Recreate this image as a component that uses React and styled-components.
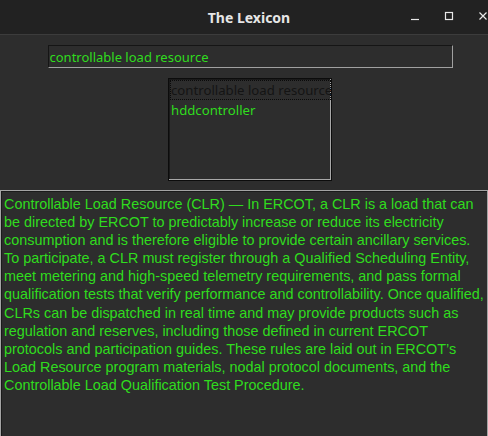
import styled, { createGlobalStyle } from "styled-components";

const GlobalStyle = createGlobalStyle`
    html, body {
        margin: 0;
        padding: 0;
        background: #2d2d2d;
        overflow: hidden;
    }
`

const lines = [
    "Controllable Load Resource (CLR) — In ERCOT, a CLR is a load that can",
    "be directed by ERCOT to predictably increase or reduce its electricity",
    "consumption and is therefore eligible to provide certain ancillary services.",
    "To participate, a CLR must register through a Qualified Scheduling Entity,",
    "meet metering and high-speed telemetry requirements, and pass formal",
    "qualification tests that verify performance and controllability. Once qualified,",
    "CLRs can be dispatched in real time and may provide products such as",
    "regulation and reserves, including those defined in current ERCOT",
    "protocols and participation guides. These rules are laid out in ERCOT’s",
    "Load Resource program materials, nodal protocol documents, and the",
    "Controllable Load Qualification Test Procedure.",
]

const items = ["controllable load resource", "hddcontroller"]

export default function App() {
    return (
        <Window>
            <GlobalStyle />
            <TitleBar>
                <Title>The Lexicon</Title>
                <Controls>
                    <ControlButton>
                        <svg width="10" height="10" viewBox="0 0 10 10">
                            <path d="M1 8.5h8" stroke="#e8e8e8" strokeWidth="1.2" />
                        </svg>
                    </ControlButton>
                    <ControlButton>
                        <svg width="10" height="10" viewBox="0 0 10 10">
                            <rect x="1.5" y="1.5" width="7" height="7" fill="none" stroke="#e8e8e8" strokeWidth="1.2" />
                        </svg>
                    </ControlButton>
                    <ControlButton>
                        <svg width="10" height="10" viewBox="0 0 10 10">
                            <path d="M1.5 1.5l7 7M8.5 1.5l-7 7" stroke="#e8e8e8" strokeWidth="1.2" />
                        </svg>
                    </ControlButton>
                </Controls>
            </TitleBar>
            <Body>
                <SearchColumn>
                    <SearchEntry defaultValue="controllable load resource" spellCheck={false} />
                    <ResultList>
                        {items.map((item, i) => (
                            <ResultItem key={item} selected={i === 0}>{item}</ResultItem>
                        ))}
                    </ResultList>
                </SearchColumn>
                <Definition>
                    {lines.map(line => <Line key={line}>{line}</Line>)}
                </Definition>
            </Body>
        </Window>
    )
}

const Window = styled.div`
    width: 488px;
    height: 436px;
    display: flex;
    flex-direction: column;
    background: #2d2d2d;
    overflow: hidden;
`

const TitleBar = styled.header`
    height: 34px;
    flex-shrink: 0;
    background: #222222;
    border-bottom: 1px solid #3c3c3c;
    display: flex;
    align-items: center;
    justify-content: center;
    position: relative;
`

const Title = styled.h1`
    margin: 0 0 0 10px;
    font-family: "Noto Sans", sans-serif;
    font-size: 14px;
    font-weight: bold;
    color: #e6e6e6;
`

const Controls = styled.div`
    position: absolute;
    top: 11px;
    left: 410px;
    display: flex;
    gap: 24px;
`

const ControlButton = styled.span`
    width: 10px;
    height: 10px;
    display: flex;
`

const Body = styled.main`
    flex: 1;
    display: flex;
    flex-direction: column;
`

const SearchColumn = styled.div`
    padding: 10px 0 0 12px;
    display: flex;
    flex-direction: column;
    align-items: center;
`

const SearchEntry = styled.input`
    box-sizing: border-box;
    width: 405px;
    height: 23px;
    margin: 0;
    padding: 0 1px;
    background: #2d2d2d;
    border-style: solid;
    border-width: 1px;
    border-color: #151515 #a0a0a0 #a0a0a0 #151515;
    outline: none;
    font-family: "Noto Sans", sans-serif;
    font-size: 13px;
    color: #30dc1e;
`

const ResultList = styled.ul`
    box-sizing: border-box;
    width: 164px;
    height: 103px;
    margin: 10px 0 0;
    padding: 1px 0 0 1px;
    list-style: none;
    background: #2d2d2d;
    border: 1px solid #0c0c0c;
    box-shadow: inset -1px -1px 0 #a8a8a8, inset 1px 1px 0 #1a1a1a;
    overflow: hidden;
`

const ResultItem = styled.li`
    height: 20px;
    line-height: 20px;
    padding: 0 0 0 1px;
    white-space: nowrap;
    overflow: hidden;
    font-family: "Noto Sans", sans-serif;
    font-size: 13.2px;
    color: ${p => p.selected ? "#141414" : "#30dc1e"};
    outline: ${p => p.selected ? "1px dotted #0a0a0a" : "none"};
    outline-offset: -1px;
`

const Definition = styled.section`
    box-sizing: border-box;
    width: 488px;
    flex: 1;
    margin-top: 9px;
    padding: 4px 3px;
    background: #2d2d2d;
    border: 1px solid #a4a4a4;
    border-bottom: none;
    box-shadow: inset 1px 1px 0 #1a1a1a;
    font-family: "Liberation Sans", Arial, sans-serif;
    font-size: 14.4px;
    line-height: 18.1px;
    color: #30dc1e;
    overflow: hidden;
`

const Line = styled.div`
    white-space: nowrap;
`
